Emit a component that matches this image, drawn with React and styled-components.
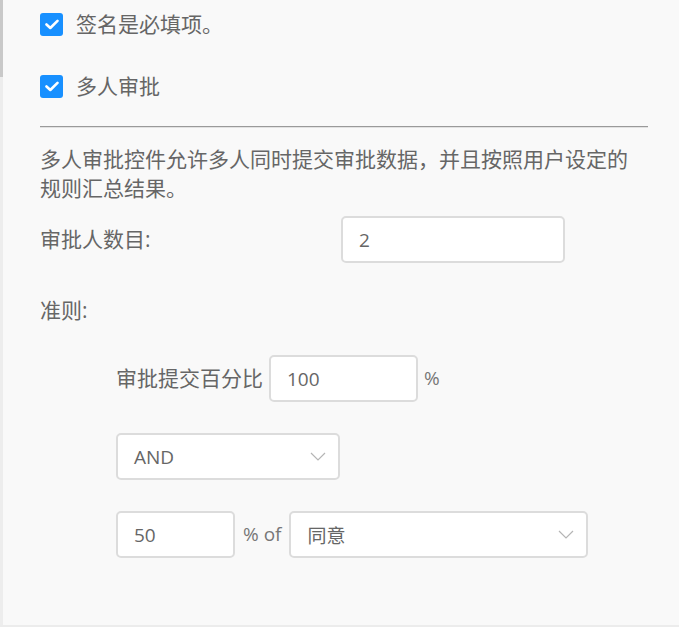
import React from 'react';
import styled, { createGlobalStyle } from 'styled-components';

const GlobalStyle = createGlobalStyle`
  html, body {
    margin: 0;
    padding: 0;
    background: #f9f9f9;
  }
`;

const Page = styled.div`
  display: flex;
  height: 627px;
  box-sizing: border-box;
  border-bottom: 2px solid #ececec;
  background: #f9f9f9;
  font-family: "Open Sans", "Noto Sans CJK SC", sans-serif;
  color: #666;
`;

const Rail = styled.div`
  width: 3px;
  flex-shrink: 0;
  background: #ededed;
`;

const Thumb = styled.div`
  height: 77px;
  background: #c9c9c9;
`;

const Content = styled.div`
  width: 608px;
  padding: 12px 0 0 37px;
`;

const CheckRow = styled.label`
  display: flex;
  align-items: center;
  gap: 13px;
  height: 24px;
  margin-top: ${p => p.$gap || 0}px;
  font-size: 21px;
  line-height: 24px;
`;

const Box = styled.span`
  width: 23px;
  height: 23px;
  border-radius: 3px;
  background: #1890ff;
  display: flex;
  align-items: center;
  justify-content: center;
`;

const Divider = styled.div`
  margin-top: 28px;
  height: 1px;
  background: #9a9a9a;
  border-bottom: 1px solid #e2e2e2;
`;

const Description = styled.p`
  margin: 16px 0 0;
  font-size: 21px;
  line-height: 29px;
  font-family: "Noto Sans CJK SC", sans-serif;
  white-space: nowrap;
`;

const FieldRow = styled.div`
  display: flex;
  align-items: center;
  gap: ${p => p.$gap ?? 8}px;
  margin-top: ${p => p.$top || 0}px;
  padding-left: ${p => p.$indent || 0}px;
`;

const Label = styled.span`
  font-size: 21px;
  line-height: 29px;
  width: ${p => (p.$width ? `${p.$width}px` : 'auto')};
  flex-shrink: 0;
`;

const Suffix = styled.span`
  font-size: 19px;
  line-height: 29px;
  color: #777;
`;

const Input = styled.div`
  box-sizing: border-box;
  width: ${p => p.$width}px;
  height: 47px;
  background: #fff;
  border: 2px solid #dcdcdc;
  border-radius: 5px;
  display: flex;
  align-items: center;
  justify-content: space-between;
  padding: 0 12px 0 16px;
  font-size: 19px;
  color: #666;
`;

const Check = () => (
  <Box>
    <svg width="14" height="11" viewBox="0 0 14 11">
      <path d="M1.5 5.5 L5.3 9 L12.5 1.8" fill="none" stroke="#fff" strokeWidth="2.6" strokeLinecap="round" strokeLinejoin="round" />
    </svg>
  </Box>
);

const Chevron = () => (
  <svg width="16" height="9" viewBox="0 0 16 9">
    <path d="M1 1 L8 8 L15 1" fill="none" stroke="#b5b5b5" strokeWidth="1.2" />
  </svg>
);

export default function App() {
  return (
    <>
      <GlobalStyle />
      <Page>
        <Rail>
          <Thumb />
        </Rail>
        <Content>
          <CheckRow>
            <Check />
            签名是必填项。
          </CheckRow>
          <CheckRow $gap={38}>
            <Check />
            多人审批
          </CheckRow>
          <Divider />
          <Description>
            多人审批控件允许多人同时提交审批数据，并且按照用户设定的
            <br />
            规则汇总结果。
          </Description>
          <FieldRow $top={14} $gap={0}>
            <Label $width={301}>审批人数目:</Label>
            <Input $width={224}>2</Input>
          </FieldRow>
          <FieldRow $top={33}>
            <Label>准则:</Label>
          </FieldRow>
          <FieldRow $top={30} $indent={76} $gap={6}>
            <Label>审批提交百分比</Label>
            <Input $width={149}>100</Input>
            <Suffix>%</Suffix>
          </FieldRow>
          <FieldRow $top={31} $indent={76}>
            <Input $width={224}>
              AND
              <Chevron />
            </Input>
          </FieldRow>
          <FieldRow $top={31} $indent={76} $gap={8}>
            <Input $width={119}>50</Input>
            <Suffix>% of</Suffix>
            <Input $width={299}>
              同意
              <Chevron />
            </Input>
          </FieldRow>
        </Content>
      </Page>
    </>
  );
}
